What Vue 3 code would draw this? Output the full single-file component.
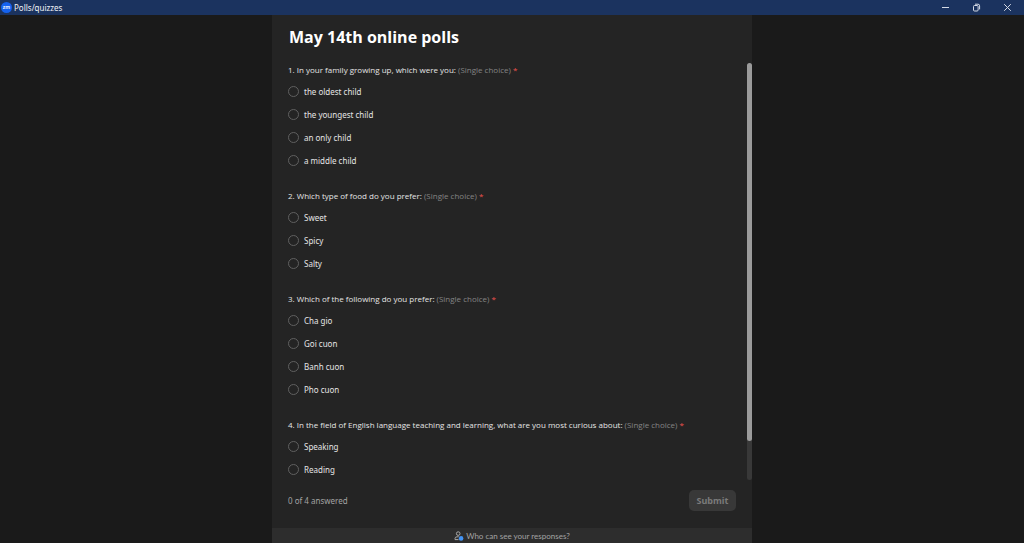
<script setup>
import { ref, computed } from 'vue'

const questions = [
  { text: 'In your family growing up, which were you:', options: ['the oldest child', 'the youngest child', 'an only child', 'a middle child'] },
  { text: 'Which type of food do you prefer:', options: ['Sweet', 'Spicy', 'Salty'] },
  { text: 'Which of the following do you prefer:', options: ['Cha gio', 'Goi cuon', 'Banh cuon', 'Pho cuon'] },
  { text: 'In the field of English language teaching and learning, what are you most curious about:', options: ['Speaking', 'Reading'] }
]
const answers = ref(questions.map(() => null))
const answered = computed(() => answers.value.filter((a) => a !== null).length)
</script>

<template>
  <div class="window">
    <header class="titlebar">
      <span class="logo" aria-hidden="true">zm</span>
      <span class="name">Polls/quizzes</span>
      <div class="controls">
        <button type="button" aria-label="Minimize">
          <svg width="9" height="9" viewBox="0 0 9 9"><path d="M1 4.5H8" /></svg>
        </button>
        <button type="button" aria-label="Restore">
          <svg width="9" height="9" viewBox="0 0 9 9"><rect x="1.5" y="2.5" width="4.6" height="5.5" rx="1" /><path d="M3 1.2H6Q7.6 1.2 7.6 2.8V6.4" /></svg>
        </button>
        <button type="button" aria-label="Close">
          <svg width="9" height="9" viewBox="0 0 9 9"><path d="M1.2 1.2L7.8 7.8M7.8 1.2L1.2 7.8" /></svg>
        </button>
      </div>
    </header>

    <main class="panel">
      <h1>May 14th online polls</h1>
      <div class="scroller">
        <form id="poll" class="questions" @submit.prevent>
          <fieldset v-for="(q, i) in questions" :key="i">
            <legend>{{ i + 1 }}. {{ q.text }} <span class="kind">(Single choice)</span> <span class="required">*</span></legend>
            <label v-for="(o, j) in q.options" :key="o">
              <input v-model="answers[i]" type="radio" :name="'q' + i" :value="j" />
              <span>{{ o }}</span>
            </label>
          </fieldset>
        </form>
        <div class="track" aria-hidden="true"><div class="thumb"></div></div>
      </div>
      <div class="actions">
        <span>{{ answered }} of {{ questions.length }} answered</span>
        <button class="submit" type="submit" form="poll" :disabled="answered < questions.length">Submit</button>
      </div>
      <footer>
        <a href="#">
          <svg width="10" height="10" viewBox="0 0 10 10" aria-hidden="true">
            <circle cx="4.2" cy="2.6" r="1.8" class="line" />
            <path d="M4.5 8.6H1V7.6Q1 5.8 3 5.8H4.8" class="line" />
            <circle cx="7.1" cy="7.4" r="2.3" class="dot" />
          </svg>
          <span>Who can see your responses?</span>
        </a>
      </footer>
    </main>
  </div>
</template>

<style>
body {
  background: #1a1a1a;
}
</style>

<style scoped>
.window {
  display: flex;
  flex-direction: column;
  height: 100vh;
  overflow: hidden;
  background: #1a1a1a;
  color: #e4e4e4;
  font: 8px/12px "Noto Sans", "Open Sans", sans-serif;
}
button {
  border: 0;
  padding: 0;
  background: none;
  font: inherit;
  color: inherit;
}
.titlebar {
  flex: none;
  display: flex;
  align-items: center;
  gap: 2px;
  height: 15px;
  padding: 0 1px;
  background: #1b335f;
  color: #f0f2f6;
}
.logo {
  width: 11px;
  height: 11px;
  border-radius: 50%;
  background: #1462f0;
  color: #e4eeff;
  font-size: 5px;
  font-weight: 700;
  line-height: 10px;
  text-align: center;
}
.controls {
  display: flex;
  margin-left: auto;
}
.controls button {
  display: flex;
  align-items: center;
  justify-content: center;
  width: 31px;
  height: 15px;
}
.controls svg {
  fill: none;
  stroke: #d5dbe6;
  stroke-width: 1;
}
.panel {
  flex: 1;
  min-height: 0;
  display: flex;
  flex-direction: column;
  width: 480px;
  max-width: 100%;
  margin: 0 auto;
  background: #242424;
}
h1 {
  margin: 10px 17px 14px;
  color: #fff;
  font-family: "Open Sans", "Noto Sans", sans-serif;
  font-size: 16px;
  line-height: 24px;
  font-weight: 660;
}
.scroller {
  flex: 1;
  min-height: 0;
  display: flex;
}
.questions {
  flex: 1;
  overflow: hidden;
  padding: 1px 0 0 16px;
}
fieldset {
  margin: 0 0 12px;
  padding: 0;
  border: 0;
  min-width: 0;
}
legend {
  padding: 0;
  margin-bottom: 10px;
  font-family: "Open Sans", "Noto Sans", sans-serif;
  white-space: nowrap;
}
.kind {
  color: #858585;
}
.required {
  color: #f0524f;
}
label {
  display: flex;
  align-items: flex-start;
  gap: 5px;
  height: 12px;
  margin-bottom: 11px;
}
input {
  appearance: none;
  width: 11px;
  height: 11px;
  margin: 0;
  border: 1px solid #606060;
  border-radius: 50%;
}
input:checked {
  border: 3px solid #4a8df8;
}
.track {
  flex: none;
  width: 5px;
  border-radius: 3px;
  background: #383838;
}
.thumb {
  height: 378px;
  max-height: 100%;
  border-radius: 3px;
  background: #9b9b9b;
}
.actions {
  flex: none;
  display: flex;
  align-items: center;
  justify-content: space-between;
  padding: 10px 16px 17px;
  color: #a3a3a3;
}
.submit {
  width: 47px;
  height: 21px;
  border-radius: 5px;
  background: #383838;
  color: #7b7b7b;
  font-size: 9px;
  font-weight: 700;
}
footer {
  flex: none;
  display: flex;
  justify-content: center;
  height: 15px;
  background: #2d2d2d;
}
footer a {
  display: flex;
  align-items: center;
  gap: 2px;
  color: #a3a3a3;
  font-family: Lato, "Noto Sans", sans-serif;
  text-decoration: none;
}
.line {
  fill: none;
  stroke: #a8a8a8;
  stroke-width: 1;
}
.dot {
  fill: #4394f5;
}
</style>
